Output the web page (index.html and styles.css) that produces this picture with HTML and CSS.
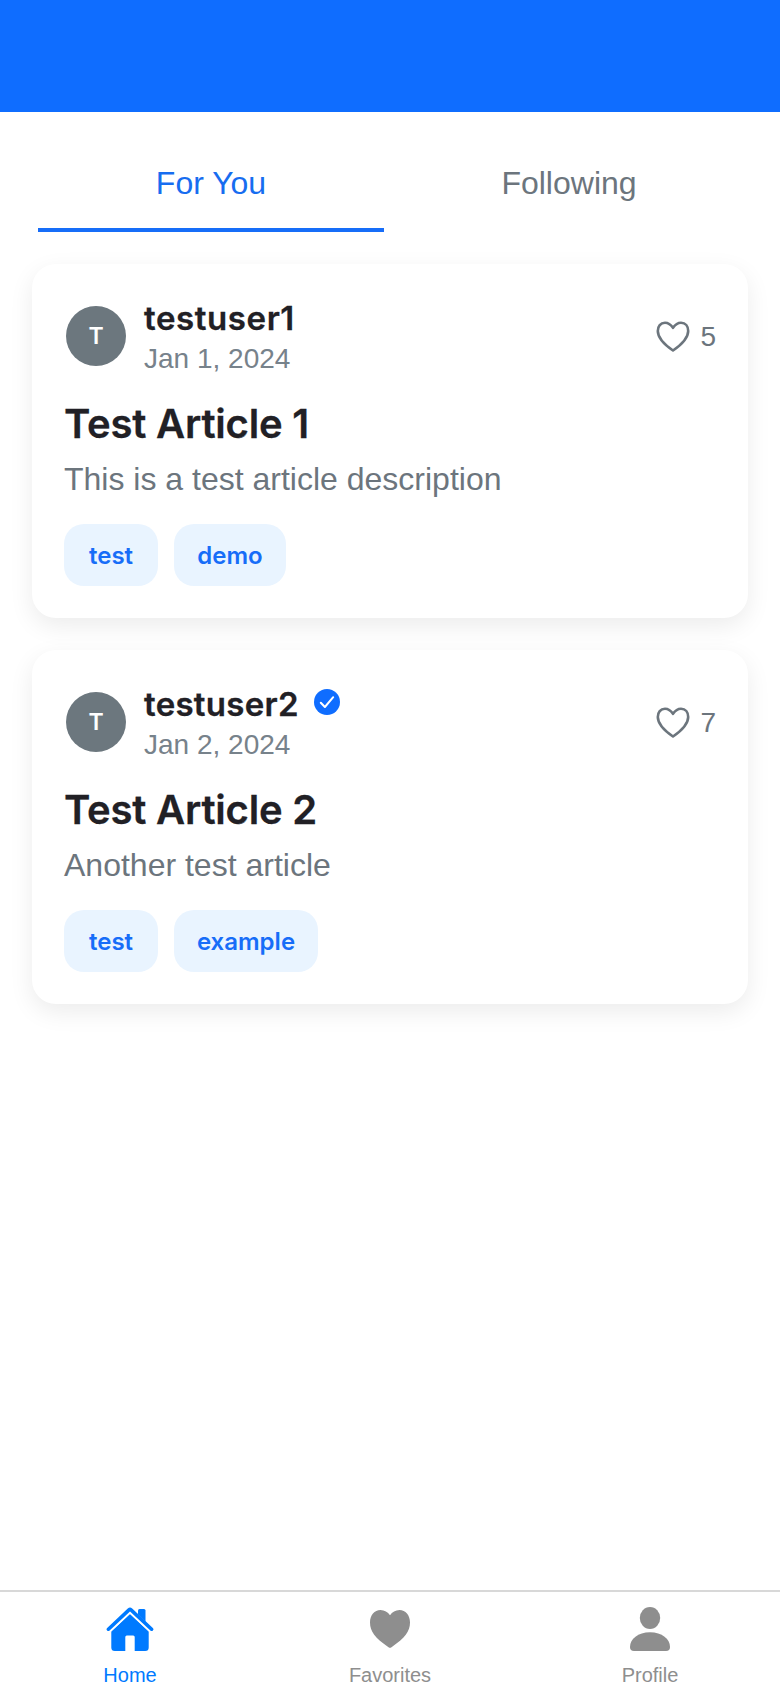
FILE: index.html
```html
<!DOCTYPE html>
<html lang="en">
<head>
<meta charset="utf-8">
<title>Home</title>
<link rel="stylesheet" href="styles.css">
</head>
<body>
<header class="topbar"></header>
<nav class="tabs">
  <a class="tab tab-active">For You</a>
  <a class="tab">Following</a>
</nav>
<main class="feed">
  <article class="card">
    <div class="card-head">
      <div class="avatar">T</div>
      <div class="author">
        <div class="name-row"><span class="name">testuser1</span></div>
        <div class="date">Jan 1, 2024</div>
      </div>
      <div class="likes">
        <svg class="heart" viewBox="0 0 36 34"><path d="M18 7.800C15.500 4 12.800 2.700 10 2.700C5.500 2.700 2.800 6.300 2.800 11C2.800 18.500 10 25 18 30.500C26 25 33.200 18.500 33.200 11C33.200 6.300 30.500 2.700 26 2.700C23.200 2.700 20.500 4 18 7.800Z"/></svg>
        <span>5</span>
      </div>
    </div>
    <h2 class="title">Test Article 1</h2>
    <p class="desc">This is a test article description</p>
    <div class="tags"><span class="tag tag-test">test</span><span class="tag tag-demo">demo</span></div>
  </article>
  <article class="card">
    <div class="card-head">
      <div class="avatar">T</div>
      <div class="author">
        <div class="name-row"><span class="name name-verified">testuser2</span>
          <svg class="badge" viewBox="0 0 26 26"><circle cx="13" cy="13" r="13"/><path d="M6.800 13.700L10.900 18L19.200 8.200"/></svg>
        </div>
        <div class="date">Jan 2, 2024</div>
      </div>
      <div class="likes">
        <svg class="heart" viewBox="0 0 36 34"><path d="M18 7.800C15.500 4 12.800 2.700 10 2.700C5.500 2.700 2.800 6.300 2.800 11C2.800 18.500 10 25 18 30.500C26 25 33.200 18.500 33.200 11C33.200 6.300 30.500 2.700 26 2.700C23.200 2.700 20.500 4 18 7.800Z"/></svg>
        <span>7</span>
      </div>
    </div>
    <h2 class="title">Test Article 2</h2>
    <p class="desc">Another test article</p>
    <div class="tags"><span class="tag tag-test">test</span><span class="tag tag-example">example</span></div>
  </article>
</main>
<footer class="tabbar">
  <a class="item item-active">
    <svg class="icon" viewBox="0 0 48 48"><path d="M24 8L42.700 25.500V41.500Q42.700 45 39.200 45H28.700V31Q28.700 29.500 27.200 29.500H20.800Q19.300 29.500 19.300 31V45H8.800Q5.300 45 5.300 41.500V25.500Z"/><path d="M32 13V4.500Q32 3 33.500 3H38Q39.500 3 39.500 4.500V18Z"/><path class="roof-gap" d="M1 26L24 4.500L47 26"/><path class="roof" d="M2.400 23.200L23 3.900Q24 3 25 3.900L45.600 23.200"/></svg>
    <span>Home</span>
  </a>
  <a class="item">
    <svg class="icon" viewBox="0 0 48 48"><path d="M24 41.700Q23.300 41.700 22.500 41.200C9 32 4 25.500 4 16.500C4 9 8.500 4 14.500 4C18.500 4 21.800 6.200 24 9.200C26.200 6.200 29.500 4 33.500 4C39.500 4 44 9 44 16.500C44 25.500 39 32 25.500 41.200Q24.700 41.700 24 41.700Z"/></svg>
    <span>Favorites</span>
  </a>
  <a class="item">
    <svg class="icon" viewBox="0 0 48 48"><ellipse cx="24" cy="12" rx="10.200" ry="11"/><path d="M8 45Q4 45 4 41C4 33 12 26.200 24 26.200S44 33 44 41Q44 45 40 45Z"/></svg>
    <span>Profile</span>
  </a>
</footer>
</body>
</html>
```
FILE: styles.css
```css
* { box-sizing: border-box; }
body {
  margin: 0;
  height: 1688px;
  display: flex;
  flex-direction: column;
  overflow: hidden;
  background: #fff;
  font-family: "Liberation Sans", Arial, sans-serif;
}
.topbar { height: 112px; flex: none; background: #0f6dff; }
.tabs { display: flex; flex: none; height: 120px; padding: 0 38px; }
.tab {
  flex: 0 0 346px;
  padding-top: 53px;
  border-bottom: 4px solid transparent;
  font-size: 32px;
  line-height: 37px;
  text-align: center;
  color: #6c757d;
}
.tab + .tab { margin-left: 12px; }
.tab-active { color: #176df0; border-bottom-color: #176df8; }
.feed {
  flex: 1;
  display: flex;
  flex-direction: column;
  gap: 32px;
  padding: 32px;
}
.card {
  height: 354px;
  padding: 32px;
  border-radius: 24px;
  background: #fff;
  box-shadow: 0 8px 24px rgba(0, 0, 0, .08);
}
.card-head { display: flex; align-items: center; height: 80px; }
.avatar {
  flex: none;
  width: 60px;
  height: 60px;
  margin: 0 18px 0 2px;
  border-radius: 50%;
  background: #6c777e;
  color: #fff;
  font: 600 23px/60px Inter, sans-serif;
  text-align: center;
}
.author { flex: 1; }
.name-row { display: flex; align-items: center; gap: 15px; height: 42px; }
.name {
  padding-top: 1px;
  color: #212025;
  font: 600 33px/42px Inter, sans-serif;
  letter-spacing: .6px;
  -webkit-text-stroke: .3px #212025;
}
.name-verified { letter-spacing: .3px; }
.badge { width: 26px; height: 26px; margin-top: -2px; fill: #0f6dff; }
.badge path { fill: none; stroke: #fff; stroke-width: 2; stroke-linecap: round; stroke-linejoin: round; }
.date { padding-top: 3px; margin-bottom: -1px; font-size: 28px; line-height: 36px; color: #77828b; }
.likes { display: flex; align-items: center; gap: 9px; color: #6c757d; font-size: 28px; line-height: 32px; padding-top: 2px; }
.heart { width: 36px; height: 34px; margin-top: -1px; fill: none; stroke: #6c757d; stroke-width: 2.600; stroke-linejoin: round; }
.title {
  margin: 22px 0 0;
  color: #212025;
  font: 600 40px/52px Inter, sans-serif;
  letter-spacing: -.2px;
  -webkit-text-stroke: .3px #212025;
}
.desc { margin: 7px 0 0; font-size: 32px; line-height: 44px; color: #6c757d; }
.tags { display: flex; gap: 16px; margin-top: 23px; }
.tag {
  height: 62px;
  padding-top: 1px;
  border-radius: 20px;
  background: #e9f4ff;
  color: #176df8;
  font: 600 24px/62px Inter, sans-serif;
  text-align: center;
}
.tag-test { width: 94px; }
.tag-demo { width: 112px; }
.tag-example { width: 144px; }
.tabbar {
  flex: none;
  display: flex;
  height: 98px;
  border-top: 2px solid #d8d8d8;
  background: #fff;
}
.item {
  flex: 1;
  display: flex;
  flex-direction: column;
  align-items: center;
  padding-top: 14px;
  color: #8e8e8e;
  font-size: 20px;
  line-height: 24px;
}
.item-active { color: #007aff; }
.icon { width: 48px; height: 48px; margin-bottom: 9px; fill: currentColor; }
.roof-gap { fill: none; stroke: #fff; stroke-width: 5; }
.roof { fill: none; stroke: currentColor; stroke-width: 3.6; stroke-linecap: round; stroke-linejoin: round; }
```
